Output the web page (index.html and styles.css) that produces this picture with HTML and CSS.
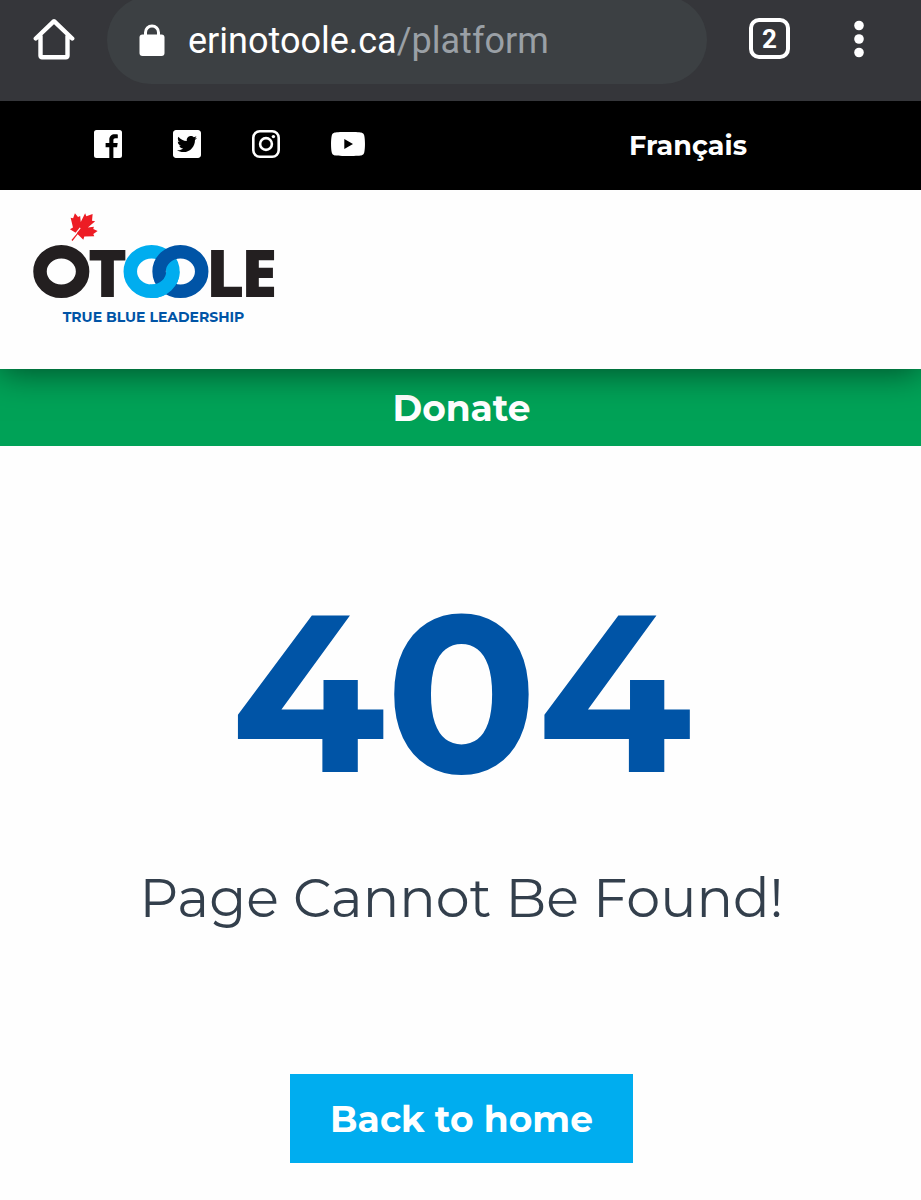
FILE: index.html
```html
<!DOCTYPE html>
<html lang="en">
<head>
<meta charset="utf-8">
<meta name="viewport" content="width=device-width, initial-scale=1">
<title>Page Cannot Be Found</title>
<link rel="stylesheet" href="styles.css">
</head>
<body>
<div class="browser">
  <button class="tool" type="button" aria-label="Home">
    <svg width="42" height="42" viewBox="0 0 42 42" fill="none" stroke="#fff" stroke-width="4.4" stroke-linecap="round" stroke-linejoin="round"><path d="M2.8 20.5 21 3.2l18.200 17.300M7.500 18v19.800a1.500 1.500 0 0 0 1.500 1.500h24a1.500 1.500 0 0 0 1.500-1.500V18"/></svg>
  </button>
  <a class="address" href="#">
    <svg width="26" height="34" viewBox="0 0 26 34"><path d="M6.500 14V8.500a6.500 6.500 0 0 1 13 0V14" fill="none" stroke="#fff" stroke-width="3"/><rect x="0.500" y="10.500" width="25" height="21.500" rx="3" fill="#fff"/></svg>
    <span>erinotoole.ca<span class="path">/platform</span></span>
  </a>
  <button class="tabs" type="button" aria-label="Open tabs">2</button>
  <button class="tool" type="button" aria-label="Menu">
    <svg width="10" height="42" viewBox="0 -2 10 42" fill="#fff"><circle cx="5" cy="5.500" r="4.800"/><circle cx="5" cy="19" r="4.800"/><circle cx="5" cy="32.500" r="4.800"/></svg>
  </button>
</div>

<nav class="topbar">
  <div class="social">
    <a href="#" aria-label="Facebook"><svg width="28" height="28" viewBox="0 0 28 28" fill="#fff"><path d="M2.500 0h23A2.500 2.500 0 0 1 28 2.500v23a2.500 2.500 0 0 1-2.500 2.500H19.400V17.200h3.700l.6-4.200h-4.300v-2.700c0-1.300.5-2 2.100-2h2.300V4.400c-.6-.1-1.700-.2-3-.2-3.300 0-5.500 2-5.500 5.600V13h-3.700v4.200h3.700V28H2.500A2.500 2.500 0 0 1 0 25.500v-23A2.500 2.500 0 0 1 2.500 0z"/></svg></a>
    <a href="#" aria-label="Twitter"><svg width="28" height="28" viewBox="0 32 448 448" fill="#fff"><path d="M400 32H48C21.500 32 0 53.500 0 80v352c0 26.500 21.500 48 48 48h352c26.500 0 48-21.500 48-48V80c0-26.500-21.500-48-48-48zm-48.900 158.800c.2 2.800.2 5.700.2 8.500 0 86.700-66 186.600-186.600 186.600-37.200 0-71.700-10.800-100.700-29.400 5.300.6 10.400.8 15.800.8 30.700 0 58.900-10.400 81.400-28-28.800-.6-53-19.500-61.300-45.500 10.100 1.500 19.200 1.500 29.600-1.200-30-6.100-52.500-32.500-52.500-64.400v-.8c8.700 4.900 18.900 7.900 29.600 8.300a65.447 65.447 0 0 1-29.200-54.600c0-12.200 3.200-23.400 8.900-33.100 32.300 39.800 80.800 65.800 135.200 68.600-9.300-44.500 24-80.600 64-80.600 18.900 0 35.900 7.900 47.900 20.700 14.800-2.800 29-8.300 41.600-15.800-4.900 15.200-15.200 28-28.800 36.100 13.200-1.400 26-5.100 37.800-10.200-8.900 13.100-20.100 24.700-32.900 34z"/></svg></a>
    <a href="#" aria-label="Instagram"><svg width="28" height="28" viewBox="0 0 28 28"><rect x="1.300" y="1.300" width="25.400" height="25.400" rx="6.500" fill="none" stroke="#fff" stroke-width="2.600"/><circle cx="14" cy="14" r="5.900" fill="none" stroke="#fff" stroke-width="2.600"/><circle cx="21.400" cy="6.600" r="1.700" fill="#fff"/></svg></a>
    <a href="#" aria-label="YouTube"><svg width="34" height="24" viewBox="0 0 34 24" fill="#fff"><path fill-rule="evenodd" d="M17 0C26 0 29.500.3 30.800.7 32.200 1.100 33 2.200 33.300 3.700 34.200 8 34.200 16 33.300 20.300c-.3 1.500-1.100 2.600-2.500 3C29.500 23.700 26 24 17 24S4.500 23.700 3.200 23.300c-1.400-.4-2.200-1.500-2.500-3C-.2 16-.2 8 .7 3.700 1 2.200 1.800 1.100 3.200.7 4.500.3 8 0 17 0zM13.300 7v10l8.700-5z"/></svg></a>
  </div>
  <a class="language" href="#" lang="fr">Français</a>
</nav>

<header class="header">
  <a href="#" aria-label="O'Toole, True Blue Leadership">
    <svg class="logo" width="250" height="116" viewBox="33 211 250 116">
      <defs><clipPath id="lower"><rect x="150" y="271.500" width="35" height="30"/></clipPath></defs>
      <g transform="translate(72 240.500) rotate(38)">
        <path fill="#ed1c24" d="M-.7 0-.4-8.500-8.500-7.500l1.300-3.300L-15-17l2.200-1.200-1.600-5 4.700 1 1-2.200 4.200 4.400-1.900-9.500 2.800 1.600L0-33.500l3.600 5.600 2.800-1.600-1.900 9.500 4.200-4.400 1 2.200 4.700-1-1.600 5L15-17l-7.800 6.200 1.300 3.300L.6-8.500.7 0z"/>
        <path d="M-1.300-6v-9" stroke="#fefefe" stroke-width="1.200"/>
      </g>
      <g class="word"><text x="88" y="297">T</text><text x="206" y="297">L</text><text x="241" y="297">E</text></g>
      <g fill="none" stroke-width="13.500">
        <ellipse cx="61.300" cy="271.500" rx="21.300" ry="19.800" stroke="#231f20"/>
        <ellipse cx="151.600" cy="271.500" rx="21.300" ry="19.800" stroke="#00adef"/>
        <ellipse cx="180.400" cy="271.500" rx="21.300" ry="19.800" stroke="#0054a6"/>
        <ellipse cx="151.600" cy="271.500" rx="21.300" ry="19.800" stroke="#00adef" clip-path="url(#lower)"/>
      </g>
      <text class="tagline" x="153.500" y="322" text-anchor="middle">TRUE BLUE LEADERSHIP</text>
    </svg>
  </a>
</header>

<a class="donate" href="#">Donate</a>

<main class="main">
  <h1 class="code">404</h1>
  <p class="message">Page Cannot Be Found!</p>
  <a class="home" href="#">Back to home</a>
</main>
</body>
</html>
```
FILE: styles.css
```css
* {
  box-sizing: border-box;
}

body {
  margin: 0;
  background: #fefefe;
  font-family: Montserrat, Inter, sans-serif;
}

a {
  color: inherit;
  text-decoration: none;
}

svg {
  display: block;
}

button {
  padding: 0;
  border: 0;
  background: none;
  color: #fff;
}

.browser {
  display: flex;
  align-items: flex-start;
  height: 101px;
  padding: 0 57px 0 33px;
  background: #35363a;
  overflow: hidden;
}

.tool {
  margin-top: 18px;
}

.address {
  display: flex;
  flex: 1;
  align-items: center;
  gap: 23px;
  height: 88px;
  margin: -4px 42px 0 32px;
  padding: 2px 0 0 32px;
  border-radius: 44px;
  background: #3c4043;
  color: #fff;
  font: 36px/40px Roboto, sans-serif;
}

.path {
  color: #9aa0a6;
}

.tabs {
  width: 41px;
  height: 41px;
  margin: 18px 64px 0 0;
  border: 4px solid #fff;
  border-radius: 10px;
  font: 700 26px/32px Roboto, sans-serif;
}

.topbar {
  display: flex;
  align-items: center;
  justify-content: space-between;
  height: 89px;
  padding: 0 174px 4px 94px;
  background: #000;
  color: #fff;
}

.social {
  display: flex;
  align-items: center;
  gap: 51px;
}

.language {
  padding-top: 4px;
  font-size: 27px;
  font-weight: 700;
}

.header {
  position: relative;
  height: 179px;
  padding: 21px 33px;
  background: #fefefe;
  box-shadow: 0 4px 32px rgba(0, 0, 0, 0.5);
  clip-path: inset(0 0 -77px 0);
}

.header a {
  display: inline-block;
}

.word {
  fill: #231f20;
  font: 800 66px "Open Sans", sans-serif;
}

.tagline {
  fill: #0054a6;
  font: 700 14px Montserrat, Inter, sans-serif;
}

.donate {
  display: block;
  padding: 1px 0 0 2px;
  background: #00a257;
  color: #fff;
  font-size: 36px;
  font-weight: 700;
  line-height: 76px;
  text-align: center;
}

.main {
  display: flex;
  flex-direction: column;
  align-items: center;
  padding: 111px 20px 37px 22px;
}

.code {
  margin: 0;
  color: #0054a6;
  font-size: 224px;
  font-weight: 700;
  line-height: 270px;
}

.message {
  margin: 33px 0 0;
  color: #333f4c;
  font-size: 54px;
  font-weight: 400;
  line-height: 76px;
}

.home {
  margin-top: 138px;
  padding: 1px 40px 0;
  background: #00adef;
  color: #fff;
  font-size: 36px;
  font-weight: 700;
  line-height: 88px;
}
```
